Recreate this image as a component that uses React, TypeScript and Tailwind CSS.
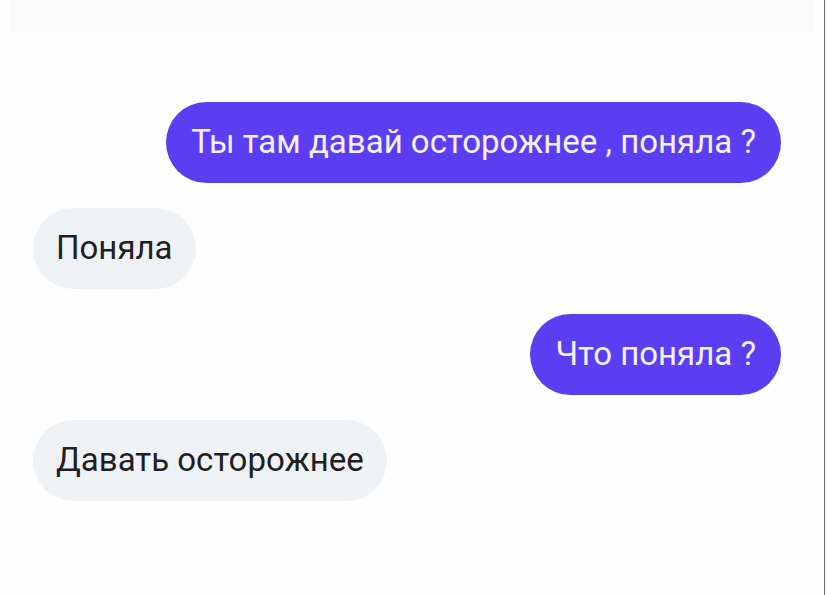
import React from 'react';

type Message = {
  id: number;
  text: string;
  mine: boolean;
};

const messages: Message[] = [
  { id: 1, text: 'Ты там давай осторожнее , поняла ?', mine: true },
  { id: 2, text: 'Поняла', mine: false },
  { id: 3, text: 'Что поняла ?', mine: true },
  { id: 4, text: 'Давать осторожнее', mine: false }
];

const Bubble = ({ text, mine }: { text: string; mine: boolean }) => {
  return <div className={`flex ${mine ? 'justify-end' : 'justify-start'}`}>
      <div className={`h-[81px] flex items-center rounded-full pb-[2px] text-[33px] leading-none ${mine ? 'px-[25px] bg-[#5b3ef2] text-[#f4f1ff]' : 'px-[23px] bg-[#eff2f5] text-[#1f1f22]'}`}>
        {text}
      </div>
    </div>;
};

export default function App() {
  return <div className="h-[595px] w-[827px] flex bg-[#fefefe]" style={{ fontFamily: 'Roboto, "Noto Sans", sans-serif' }}>
      <div className="w-[824px] flex flex-col">
        <div className="mx-[10px] h-[32px] bg-[#fafafa]" />
        <div className="flex flex-col gap-[25px] pt-[70px] pl-[33px] pr-[43px]">
          {messages.map(m => <Bubble key={m.id} text={m.text} mine={m.mine} />)}
        </div>
      </div>
      <div className="w-px bg-[#6e6e6e]" />
    </div>;
}
